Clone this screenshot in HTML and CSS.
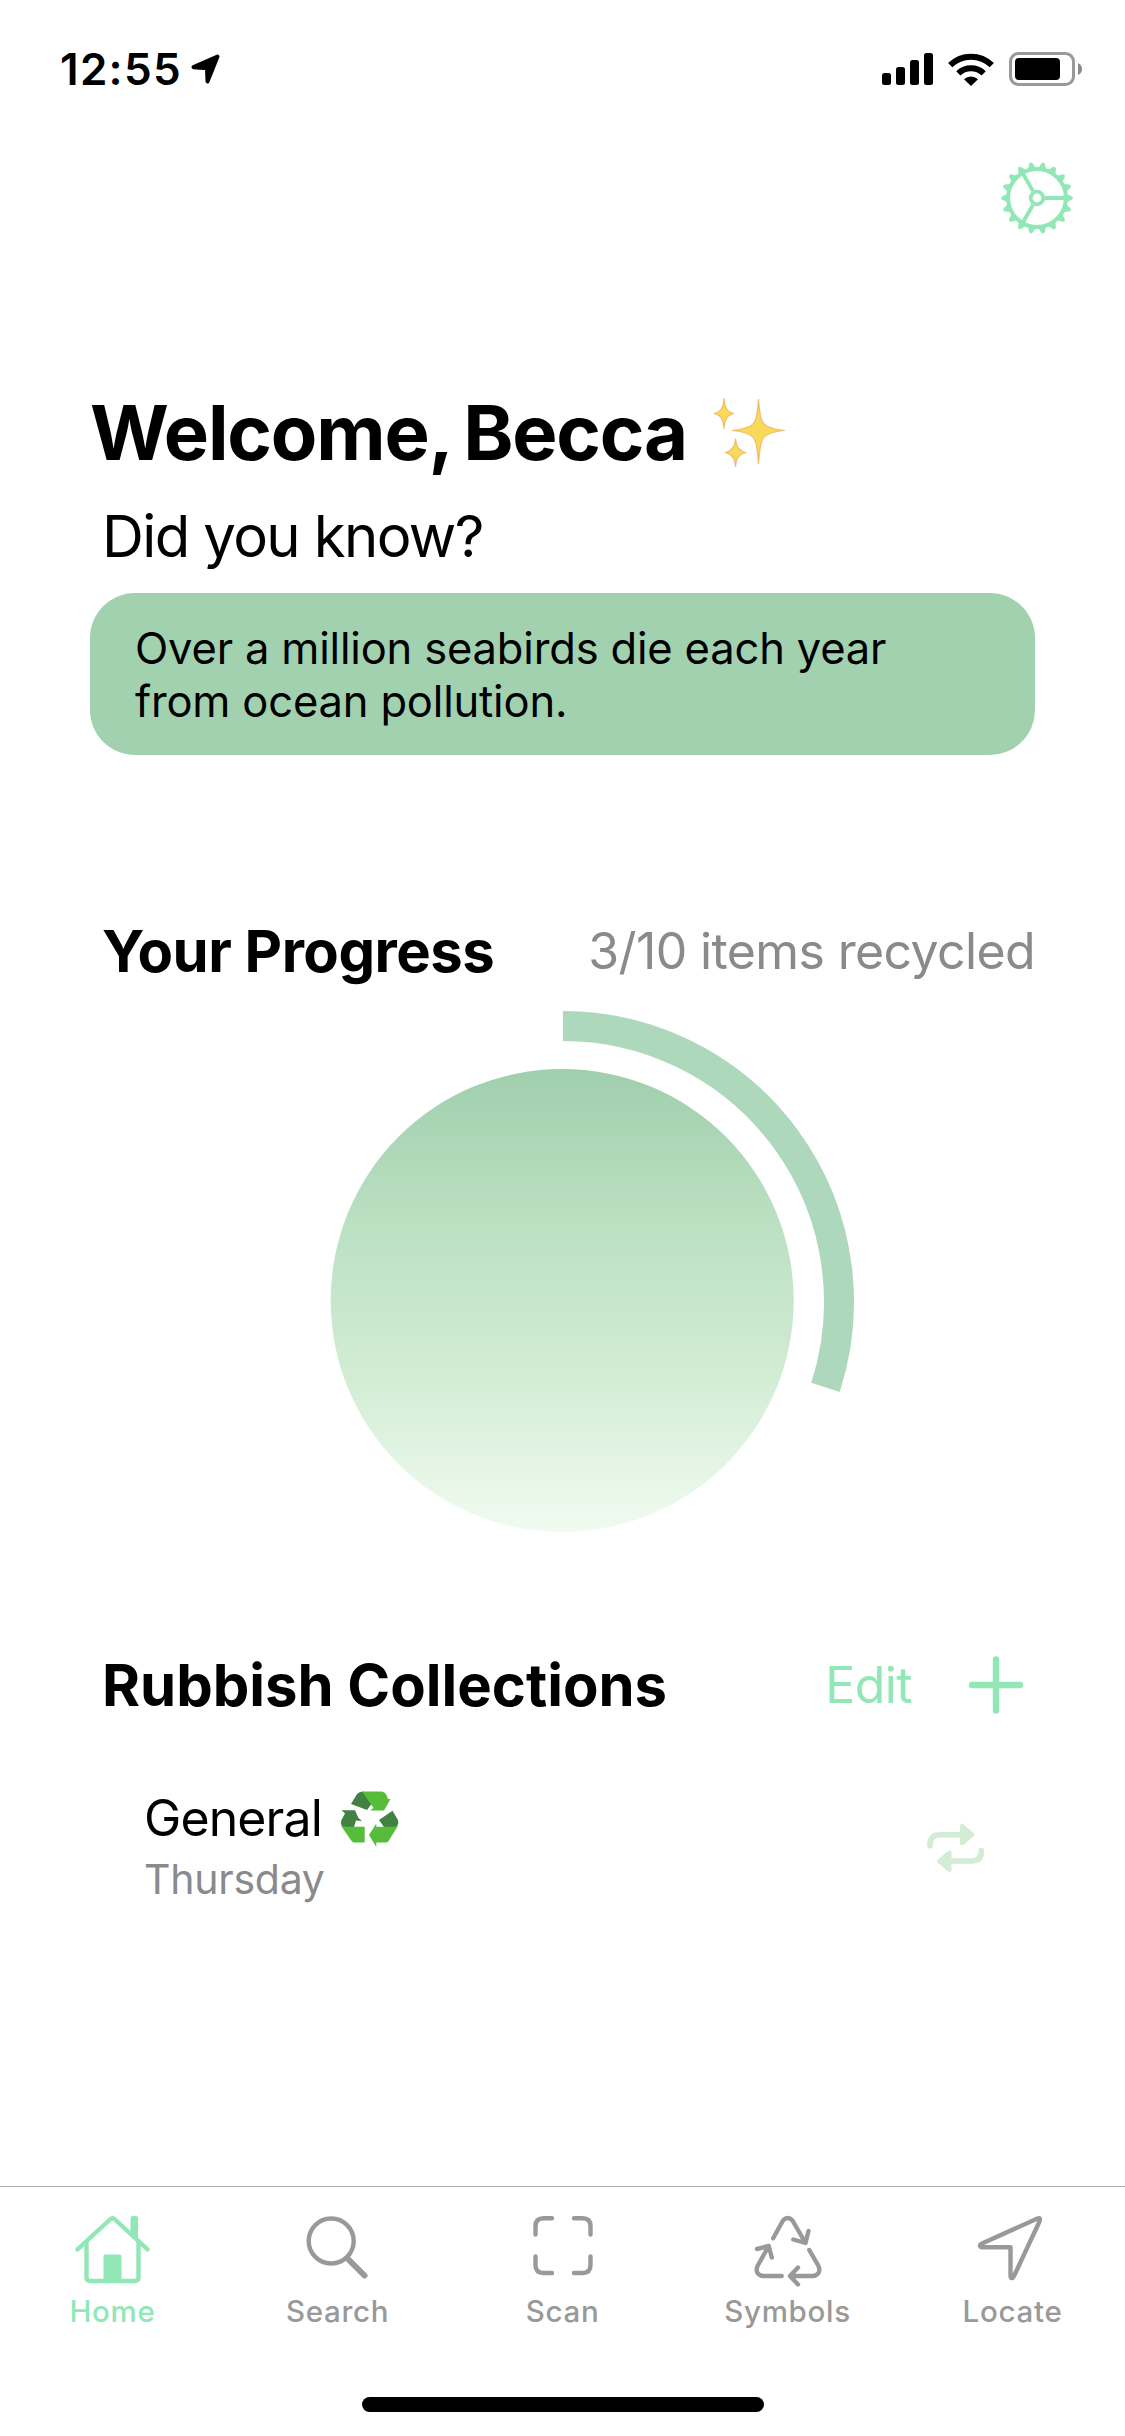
FILE: index.html
```html
<!DOCTYPE html>
<html lang="en">
<head>
<meta charset="utf-8">
<title>Home</title>
<link rel="stylesheet" href="styles.css">
</head>
<body>
<div class="app">
  <header class="status">
    <div class="status-left">
      <span class="time">12:55</span>
      <svg class="loc" width="30" height="30" viewBox="0 0 30 30"><path d="M2.5 13.2 26.500 2.500 16.500 27.500 16 14.200Z" fill="#000" stroke="#000" stroke-width="4" stroke-linejoin="round"/></svg>
    </div>
    <div class="status-right">
      <svg width="51" height="33" viewBox="0 0 51 33"><rect x="0" y="20" width="9" height="12" rx="2.5"/><rect x="14" y="14" width="9" height="18" rx="2.5"/><rect x="28" y="7" width="9" height="25" rx="2.5"/><rect x="42" y="0" width="9" height="32" rx="2.5"/></svg>
      <svg width="46" height="33" viewBox="0 0 46 33"><path d="M23 33 16 26.2A10.5 10.5 0 0 1 30 26.2Z"/><path d="M10.3 20.4A18.3 18.3 0 0 1 35.7 20.4" fill="none" stroke="#000" stroke-width="6"/><path d="M2.2 12.2A29.6 29.6 0 0 1 43.8 12.2" fill="none" stroke="#000" stroke-width="6"/></svg>
      <svg width="73" height="34" viewBox="0 0 73 34"><rect x="1.5" y="1.5" width="63" height="31" rx="8" fill="none" stroke="#999" stroke-width="3"/><rect x="6" y="6" width="45" height="22" rx="4"/><path d="M69 11Q73 13 73 17T69 23Z" fill="#8a8a8a"/></svg>
    </div>
  </header>
  <div class="toolbar">
    <svg width="74" height="74" viewBox="-37 -37 74 74" fill="none" stroke="#91e7b5" stroke-width="3.8">
      <circle r="28.9" stroke-width="4"/><circle r="6.3"/>
      <path d="M8 0H28M-4 6.900-14 24.200M-4-6.900-14-24.200"/>
      <defs><path id="tooth" d="M29-4.600 31.500-3.200 34.800-1.800Q37 0 34.800 1.800L31.500 3.200 29 4.600Z" fill="#91e7b5" stroke="none"/></defs>
      <use href="#tooth"/><use href="#tooth" transform="rotate(20)"/><use href="#tooth" transform="rotate(40)"/><use href="#tooth" transform="rotate(60)"/><use href="#tooth" transform="rotate(80)"/><use href="#tooth" transform="rotate(100)"/><use href="#tooth" transform="rotate(120)"/><use href="#tooth" transform="rotate(140)"/><use href="#tooth" transform="rotate(160)"/><use href="#tooth" transform="rotate(180)"/><use href="#tooth" transform="rotate(200)"/><use href="#tooth" transform="rotate(220)"/><use href="#tooth" transform="rotate(240)"/><use href="#tooth" transform="rotate(260)"/><use href="#tooth" transform="rotate(280)"/><use href="#tooth" transform="rotate(300)"/><use href="#tooth" transform="rotate(320)"/><use href="#tooth" transform="rotate(340)"/>
    </svg>
  </div>
  <main>
    <div class="welcome">
      <h1>Welcome, Becca</h1>
      <svg width="74" height="74" viewBox="0 0 74 74">
        <g fill="#f8d958" stroke="#f0ab62" stroke-width="1.2" stroke-opacity=".75"><path d="M45.500 4C47 22 48 29 55 31.500Q61 34.500 72 35.500Q61 36.500 55 39.500C48 42 47 50 45.500 69C44 50 43 42 36 39.500Q30 36.500 19 35.500Q30 34.500 36 31.500C43 29 44 22 45.500 4Z"/><path d="M11 3C11.800 12 13 16 20.500 18.500C13 21 11.800 25 11 34C10.200 25 9 21 1.500 18.500C9 16 10.200 12 11 3Z"/><path d="M22.500 43.500C23.300 51 25 55 32.500 57.500C25 60 23.300 64 22.500 72C21.700 64 20 60 12.500 57.500C20 55 21.700 51 22.500 43.500Z"/></g>
      </svg>
    </div>
    <h2 class="lead">Did you know?</h2>
    <p class="fact">Over a million seabirds die each year<br>from ocean pollution.</p>
    <section class="progress">
      <div class="row"><h2 class="title">Your Progress</h2><span class="count">3/10 items recycled</span></div>
      <svg class="ring" width="600" height="540" viewBox="0 0 600 540">
        <defs><linearGradient id="fill" x1="0" y1="0" x2="0" y2="1"><stop offset="0" stop-color="#a0cfae"/><stop offset=".34" stop-color="#bbe0c2"/><stop offset=".67" stop-color="#d3edd5"/><stop offset="1" stop-color="#f1fbf1"/></linearGradient></defs>
        <circle cx="299.200" cy="289.500" r="231.500" fill="url(#fill)"/>
        <path d="M300 15A276 276 0 0 1 562.490 376.290" fill="none" stroke="#add8bc" stroke-width="30"/>
      </svg>
    </section>
    <section class="collections">
      <div class="row"><h2>Rubbish Collections</h2>
        <div class="actions"><span class="edit">Edit</span><svg width="56" height="58" viewBox="0 0 56 58"><path d="M28 3.500V54.500M4 29H52" stroke="#91e7b5" stroke-width="6.400" stroke-linecap="round"/></svg></div>
      </div>
      <div class="item">
        <div>
          <div class="name"><span>General</span>
            <svg width="60" height="58" viewBox="0 -1 60 58">
              <g fill="#438143"><path d="M11 14 17 4Q19 1.500 23 1.500L33 12 27 20Z"/><path d="M1.500 20.300H15L18.300 27.700 22 31 16 30.500 14 37H3Q0 34 1.500 30L5 23.500Z"/><path d="M39 30 52.500 20.700 58 30Q59 34 56 37H44Z"/></g>
              <g fill="#55bd39"><path d="M22 1.500H42Q45 2 46.500 5L48 9 50.500 9 44 20.500H30L33.500 18Z"/><path d="M.5 32Q1.500 36.700 6 36.700H24.700V52.500H14Q12 52 10.500 49.500L1.500 36.500Z"/><path d="M58.500 32Q57.500 36.700 53 36.700H36.300V33.500L29 45 36.300 57V52.500H46Q48.500 52 49.500 49.500L57.500 36.500Z"/></g>
            </svg>
          </div>
          <div class="day">Thursday</div>
        </div>
        <svg width="58" height="54" viewBox="0 -2 58 54" fill="#d2ecd5"><path d="M3 24.700V23.500Q3 13.700 13 13.700H34M54.300 29.500V30.500Q54.300 40 44.500 40H22" fill="none" stroke="#d2ecd5" stroke-width="5.600" stroke-linecap="round"/><path d="M35 4.700V22.500L45.500 13.700ZM22.500 31.500V49L12 40.200Z" stroke="#d2ecd5" stroke-width="4" stroke-linejoin="round"/></svg>
      </div>
    </section>
  </main>
  <nav class="tabs">
    <div class="tab active">
      <svg width="76" height="72" viewBox="74.500 2215 76 72"><path d="M77 2249.400 109.500 2219.500Q112 2217 114.500 2219.500L147 2249.400M86 2242V2277Q86 2281 90 2281H134Q138 2281 138 2277V2242"/><path d="M130 2218Q130 2216 132 2216H135.500Q137.500 2216 137.500 2218V2241L130 2234ZM103 2256.500Q103 2254.500 105 2254.500H119Q121 2254.500 121 2256.500V2281H103Z" fill="currentColor" stroke="none"/></svg>
      <span>Home</span></div>
    <div class="tab">
      <svg width="76" height="72" viewBox="299.500 2215 76 72"><circle cx="330.700" cy="2241" r="22.500"/><path d="M347.500 2259 364 2275.500" stroke-width="6"/></svg>
      <span>Search</span></div>
    <div class="tab">
      <svg width="76" height="72" viewBox="524.500 2215 76 72"><path d="M551.500 2218.200H543Q535 2218.200 535 2226V2234.500M573.500 2218.200H582Q590 2218.200 590 2226V2234.500M551.500 2273H543Q535 2273 535 2265V2256.500M573.500 2273H582Q590 2273 590 2265V2256.500"/></svg>
      <span>Scan</span></div>
    <div class="tab">
      <svg width="76" height="72" viewBox="749.500 2215 76 72"><path d="M772.700 2238.300 782.500 2220.500Q787.300 2215.500 792 2220.500L805 2243M792.800 2239.500 805 2243 808 2231M781.200 2276H762Q754 2274 757 2266L768.200 2246M756.500 2249 768.200 2246 771.300 2257.500M808.800 2250 818 2266Q821 2274 813 2276H789.500M797.500 2267.500 789.500 2276 797.500 2284.500"/></svg>
      <span>Symbols</span></div>
    <div class="tab">
      <svg width="76" height="72" viewBox="975 2215 76 72"><path d="M1037.500 2218.500 982 2243.500C979 2245 979.500 2247.200 982.500 2247.200H1010.500V2275C1010.500 2279 1012.500 2279 1014 2276L1039.500 2221.500Q1041 2217 1037.500 2218.500Z"/></svg>
      <span>Locate</span></div>
  </nav>
  <div class="indicator"></div>
</div>
</body>
</html>
```
FILE: styles.css
```css
body {
  margin: 0;
  background: #fff;
  color: #000;
  font-family: Inter, "Liberation Sans", sans-serif;
}
h1, h2, p { margin: 0; }
svg { display: block; flex: none; }
.app {
  display: flex;
  flex-direction: column;
  width: 1125px;
  height: 2436px;
  overflow: hidden;
}
.status {
  display: flex;
  justify-content: space-between;
  align-items: center;
  height: 138px;
  padding: 0 43px 0 60px;
}
.status-left { display: flex; align-items: center; gap: 9px; }
.time { font-size: 44px; font-weight: 560; letter-spacing: 1.3px; white-space: nowrap; }
.status-right { display: flex; align-items: center; gap: 15px; }
.toolbar {
  display: flex;
  justify-content: flex-end;
  align-items: center;
  height: 120px;
  padding-right: 51px;
}
main {
  flex: 1;
  min-height: 0;
  padding: 128px 90px 0;
}
.welcome { display: flex; align-items: center; gap: 26px; height: 92px; }
h1 { font-size: 76px; line-height: 92px; font-weight: 700; letter-spacing: -1.2px; word-spacing: -4px; white-space: nowrap; }
h2 { font-size: 58px; line-height: 72px; font-weight: 700; white-space: nowrap; }
.title { letter-spacing: -0.5px; }
.lead { font-weight: 400; letter-spacing: -1.6px; margin: 22px 0 21px 12px; }
.fact {
  height: 162px;
  box-sizing: border-box;
  padding: 29px 45px 27px;
  border-radius: 45px;
  background: #a2d1b0;
  font-size: 43.5px;
  line-height: 53px;
  letter-spacing: -0.17px;
  white-space: nowrap;
}
.row { display: flex; justify-content: space-between; align-items: center; height: 72px; padding-left: 12px; }
.progress { margin-top: 160px; }
.count { font-size: 50px; line-height: 72px; letter-spacing: -0.62px; color: #8a8a8d; white-space: nowrap; }
.ring { margin: 24px auto 0; }
.collections { margin-top: 98px; }
.actions { display: flex; align-items: center; gap: 56px; padding-right: 11px; }
.edit { font-size: 50px; line-height: 72px; letter-spacing: -0.6px; color: #91e7b5; }
.item {
  display: flex;
  justify-content: space-between;
  align-items: center;
  margin-top: 67px;
  padding: 0 50px 0 54px;
}
.name { display: flex; align-items: center; gap: 18px; font-size: 50px; line-height: 60px; letter-spacing: -0.9px; }
.day { margin-top: 6px; font-size: 41px; line-height: 50px; letter-spacing: -0.25px; color: #8a8a8d; }
.tabs {
  display: grid;
  grid-template-columns: repeat(5, 1fr);
  height: 210px;
  border-top: 1px solid #acacac;
}
.tab {
  display: flex;
  flex-direction: column;
  align-items: center;
  padding-top: 28px;
  color: #999;
  font-size: 29.5px;
  line-height: 40px;
  font-weight: 470;
  letter-spacing: 0.7px;
}
.tab.active { color: #91e7b5; }
.tab svg { fill: none; stroke: currentColor; stroke-width: 4.4; stroke-linecap: round; stroke-linejoin: round; }
.tab span { margin-top: 4px; }
.indicator { width: 402px; height: 15px; margin: 0 auto 24px; border-radius: 8px; background: #000; }
```
